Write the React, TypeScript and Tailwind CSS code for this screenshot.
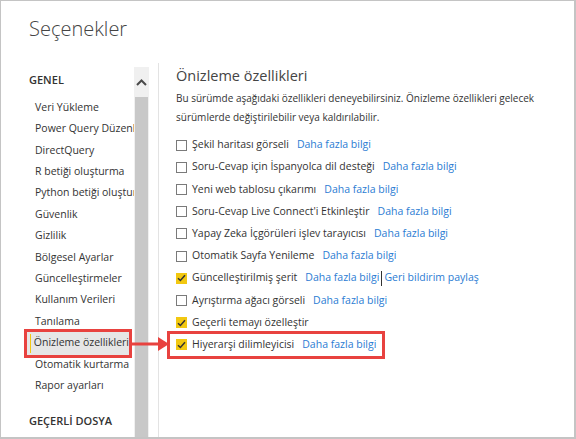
import React from "react";

const navItems = [
  "Veri Yükleme",
  "Power Query Düzenleyicisi",
  "DirectQuery",
  "R betiği oluşturma",
  "Python betiği oluşturma",
  "Güvenlik",
  "Gizlilik",
  "Bölgesel Ayarlar",
  "Güncelleştirmeler",
  "Kullanım Verileri",
  "Tanılama",
  "Önizleme özellikleri",
  "Otomatik kurtarma",
  "Rapor ayarları",
];

type Feature = { label: string; checked: boolean; link?: boolean; extra?: boolean };

const features: Feature[] = [
  { label: "Şekil haritası görseli", checked: false, link: true },
  { label: "Soru-Cevap için İspanyolca dil desteği", checked: false, link: true },
  { label: "Yeni web tablosu çıkarımı", checked: false, link: true },
  { label: "Soru-Cevap Live Connect'i Etkinleştir", checked: false, link: true },
  { label: "Yapay Zeka İçgörüleri işlev tarayıcısı", checked: false, link: true },
  { label: "Otomatik Sayfa Yenileme", checked: false, link: true },
  { label: "Güncelleştirilmiş şerit", checked: true, link: true, extra: true },
  { label: "Ayrıştırma ağacı görseli", checked: false, link: true },
  { label: "Geçerli temayı özelleştir", checked: true },
];

function Box({ checked }: { checked: boolean }) {
  if (checked) {
    return (
      <span className="w-[11px] h-[11px] bg-[#f2c811] flex items-center justify-center shrink-0">
        <svg width="9" height="8" viewBox="0 0 9 8">
          <path d="M1 4.2 L3.4 6.5 L8 1.3" fill="none" stroke="#333" strokeWidth="1.5" />
        </svg>
      </span>
    );
  }
  return <span className="w-[11px] h-[11px] border-[1.5px] border-[#7a7a7a] bg-white shrink-0" />;
}

function Row({ f }: { f: Feature }) {
  return (
    <div className="h-[22.2px] flex items-center">
      <Box checked={f.checked} />
      <span className="ml-[5px] text-[#333]">{f.label}</span>
      {f.link && <span className="ml-[8px] text-[#2b7cd3]">Daha fazla bilgi</span>}
      {f.extra && (
        <>
          <span className="mx-[2px] w-px h-[15px] bg-[#333]" />
          <span className="text-[#2b7cd3]">Geri bildirim paylaş</span>
        </>
      )}
    </div>
  );
}

export default function App() {
  return (
    <div
      className="w-[576px] h-[439px] bg-white border-l border-t border-r-2 border-b-2 border-[#c4c4c4] flex flex-col overflow-hidden relative text-[10.5px]"
      style={{ fontFamily: '"Open Sans", "Noto Sans", sans-serif' }}
    >
      <div className="h-[62px] pl-[28px] pt-[14px] text-[20px] font-light text-[#444] leading-[28px]">
        Seçenekler
      </div>
      <div className="flex flex-1 min-h-0">
        <div className="w-[133px] overflow-hidden shrink-0 whitespace-nowrap">
          <div className="h-[34px] pl-[28px] flex items-center font-semibold text-[11px] text-[#333]">GENEL</div>
          {navItems.map((n) => {
            const sel = n === "Önizleme özellikleri";
            return sel ? (
              <div key={n} className="h-[21.4px] flex items-center">
                <div className="ml-[26px] w-[102px] h-[23px] bg-[#e6e6e6] flex items-center outline-[3px] outline-solid outline-[#e8423f]">
                  <span className="ml-[3px] w-[2px] h-[19px] bg-[#f2c811]" />
                  <span className="ml-[3px] text-[#333]">{n}</span>
                </div>
              </div>
            ) : (
              <div key={n} className="h-[21.4px] flex items-center pl-[34px] text-[#333]">
                {n}
              </div>
            );
          })}
          <div className="h-[34px] pl-[28px] flex items-end pb-[1px] font-semibold text-[11px] text-[#333]">
            GEÇERLİ DOSYA
          </div>
        </div>
        <div className="w-[15px] mt-[4px] flex flex-col bg-[#f0f0f0] shrink-0">
          <div className="h-[30px] flex items-center justify-center">
            <svg width="11" height="7" viewBox="0 0 11 7">
              <path d="M1 6 L5.5 1.5 L10 6" fill="none" stroke="#4a4a4a" strokeWidth="2" />
            </svg>
          </div>
          <div className="flex-1 bg-[#c8c8c8] mx-px" />
        </div>
        <div className="w-[9px] shrink-0" />
        <div className="w-px bg-[#e3e3e3] shrink-0" />
        <div className="flex-1 pl-[17px] whitespace-nowrap">
          <div className="h-[26px] flex items-center text-[14.5px] text-[#444]">Önizleme özellikleri</div>
          <div className="leading-[19px] text-[10px] text-[#333]">
            <div>Bu sürümde aşağıdaki özellikleri deneyebilirsiniz. Önizleme özellikleri gelecek</div>
            <div>sürümlerde değiştirilebilir veya kaldırılabilir.</div>
          </div>
          <div className="mt-[7px]">
            {features.map((f) => (
              <Row key={f.label} f={f} />
            ))}
            <div className="h-[22.2px] flex items-center">
              <div className="-ml-[6px] pl-[6px] pr-[6px] h-[22px] flex items-center outline-[3px] outline-solid outline-[#e8423f]">
                <Box checked={true} />
                <span className="ml-[5px] text-[#333]">Hiyerarşi dilimleyicisi</span>
                <span className="ml-[8px] text-[#2b7cd3]">Daha fazla bilgi</span>
              </div>
            </div>
          </div>
        </div>
      </div>
      <svg className="absolute left-[131px] top-[336px]" width="38" height="14" viewBox="0 0 38 14">
        <rect x="0" y="5.5" width="28" height="3" fill="#e8423f" />
        <path d="M26 0 L37 7 L26 14 Z" fill="#e8423f" />
      </svg>
    </div>
  );
}
